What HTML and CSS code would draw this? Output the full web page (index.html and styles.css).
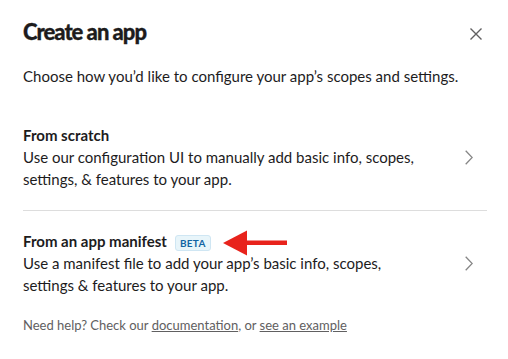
FILE: index.html
```html
<!DOCTYPE html>
<html lang="en">
<head>
    <meta charset="UTF-8">
    <meta name="viewport" content="width=device-width, initial-scale=1.0">
    <title>Create an app</title>
    <link rel="stylesheet" href="styles.css">
</head>
<body>

    <div class="modal">
        <div class="modal-header">
            <h1>Create an app</h1>
            <button class="close" aria-label="Close">
                <svg width="12" height="12" viewBox="0 0 12 12">
                    <path d="M0.5 0.5 L11.5 11.5 M11.5 0.5 L0.5 11.5" stroke="#616061" stroke-width="1.4" fill="none"/>
                </svg>
            </button>
        </div>

        <p class="intro">Choose how you’d like to configure your app’s scopes and settings.</p>

        <!-- Option 1 -->
        <div class="option">
            <div class="option-text">
                <div class="option-title">From scratch</div>
                <div class="option-desc">Use our configuration UI to manually add basic info, scopes, settings, &amp; features to your app.</div>
            </div>
            <svg class="chevron" width="8" height="15" viewBox="0 0 8 15">
                <path d="M0.7 0.7 L7.2 7.5 L0.7 14.3" stroke="#868686" stroke-width="1.3" fill="none"/>
            </svg>
        </div>

        <!-- Option 2 -->
        <div class="option last">
            <div class="option-text">
                <div class="option-title">
                    From an app manifest
                    <span class="badge">BETA</span>
                    <svg class="arrow" width="66" height="26" viewBox="0 0 66 26">
                        <polygon points="0,13 24,0.5 24,25.5" fill="#e8231c"/>
                        <rect x="22" y="10.5" width="42" height="4.5" fill="#e8231c"/>
                    </svg>
                </div>
                <div class="option-desc">Use a manifest file to add your app’s basic info, scopes, settings &amp; features to your app.</div>
            </div>
            <svg class="chevron" width="8" height="15" viewBox="0 0 8 15">
                <path d="M0.7 0.7 L7.2 7.5 L0.7 14.3" stroke="#868686" stroke-width="1.3" fill="none"/>
            </svg>
        </div>

        <p class="help">Need help? Check our <a href="#">documentation</a>, or <a href="#">see an example</a></p>
    </div>

</body>
</html>
```

FILE: styles.css
```css
* {
    margin: 0;
    padding: 0;
    box-sizing: border-box;
    font-family: 'Lato', 'Noto Sans', sans-serif;
}
body {
    background: white;
    color: #1d1c1d;
}
.modal {
    width: 508px;
    padding: 18px 21px 0 23px;
}
.modal-header {
    display: flex;
    justify-content: space-between;
    align-items: center;
}
h1 {
    font-size: 22px;
    font-weight: 900;
    line-height: 28px;
    letter-spacing: -1px;
    -webkit-text-stroke: 0.3px #1d1c1d;
}
.close {
    background: none;
    border: none;
    width: 12px;
    height: 12px;
    margin: 3px 5px 0 0;
    display: flex;
    cursor: pointer;
}
.intro {
    font-size: 15px;
    line-height: 22px;
    margin-top: 19px;
    margin-bottom: 18px;
}
.option {
    display: flex;
    justify-content: space-between;
    align-items: center;
    padding: 19px 0 20px;
    border-bottom: 1px solid #dddddd;
}
.option.last {
    border-bottom: none;
}
.option-text {
    width: 400px;
    font-size: 15px;
    line-height: 22px;
}
.option-title {
    position: relative;
    display: flex;
    align-items: center;
    height: 22px;
    font-weight: 700;
}
.chevron {
    margin-right: 14px;
}
.badge {
    margin: 4px 0 0 8px;
    height: 16px;
    padding: 0 4px;
    display: flex;
    align-items: center;
    font-size: 10px;
    font-weight: 700;
    letter-spacing: 0.3px;
    color: #1264a3;
    background: #e8f5fa;
    border: 1px solid #cfe6f3;
    border-radius: 3px;
}
.arrow {
    position: absolute;
    left: 200px;
    top: 0;
}
.help {
    font-size: 13px;
    line-height: 18px;
    color: #616061;
}
.help a {
    color: #616061;
    text-decoration: underline;
}
```
